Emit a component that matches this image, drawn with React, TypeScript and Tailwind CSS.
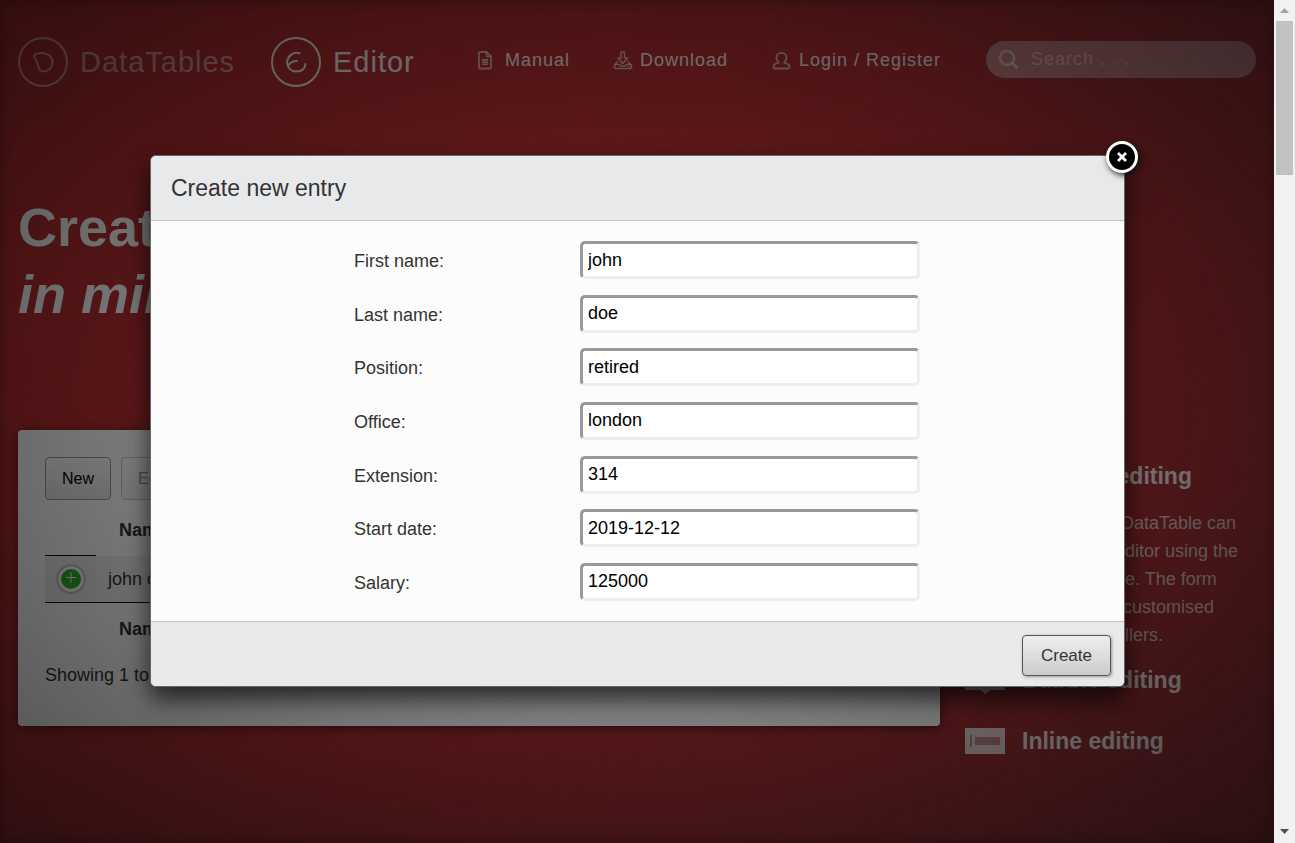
import React from "react";

const fields = [
  { id: "first-name", label: "First name:", value: "john" },
  { id: "last-name", label: "Last name:", value: "doe" },
  { id: "position", label: "Position:", value: "retired" },
  { id: "office", label: "Office:", value: "london" },
  { id: "extension", label: "Extension:", value: "314" },
  { id: "start-date", label: "Start date:", value: "2019-12-12" },
  { id: "salary", label: "Salary:", value: "125000" },
];

function ManualIcon() {
  return (
    <svg width="16" height="20" viewBox="0 0 16 20" fill="none" stroke="currentColor" strokeWidth="1.8" strokeLinejoin="round">
      <path d="M3 2h6.500l4.500 4.500v11a1 1 0 0 1-1 1H3a1 1 0 0 1-1-1V3a1 1 0 0 1 1-1z" />
      <path d="M9.500 2v4.500H14" strokeWidth="1.500" />
      <path d="M5 10h6M5 12.500h6" strokeWidth="2" />
      <path d="M5 14.500h6" strokeWidth="1" />
    </svg>
  );
}

function DownloadIcon() {
  return (
    <svg width="20" height="20" viewBox="0 0 20 20" fill="none" stroke="currentColor" strokeWidth="1.6" strokeLinejoin="round">
      <path d="M8 2h3.500v6h3.200l-5 5.500L4.800 8H8z" />
      <path d="M4.500 11.500 2 14.500M15 11.500l2.500 3" />
      <path d="M2.500 14.500h4l1.500 1.500h4l1.500-1.500h4c.7 0 1 .4 1 1v2c0 .6-.3 1-1 1h-15c-.7 0-1-.4-1-1v-2c0-.6.3-1 1-1z" />
      <path d="M14.500 16.700h2" strokeWidth="1.200" />
    </svg>
  );
}

function UserIcon() {
  return (
    <svg width="20" height="20" viewBox="0 0 20 20" fill="none" stroke="currentColor" strokeWidth="1.8" strokeLinejoin="round">
      <path d="M6.800 12.500C5.500 11.500 4.500 9.800 4.500 8c0-3.200 2.200-5.200 5-5.200s5 2 5 5.200c0 1.800-1 3.500-2.300 4.500 1 .7 3 .9 4.300 2 .8.700 1 1.500 1 2.300 0 1-.6 1.700-1.600 1.700H3.100c-1 0-1.600-.7-1.600-1.700 0-.8.200-1.600 1-2.300 1.300-1.100 3.300-1.300 4.300-2z" />
    </svg>
  );
}

function Header() {
  return (
    <header className="flex items-start pt-[37px]">
      <a href="#datatables" className="flex w-[253px] items-center gap-3 text-[29px] leading-[50px] tracking-[1px] text-white/50">
        <svg width="50" height="50" viewBox="0 0 50 50" fill="none" stroke="currentColor">
          <circle cx="25" cy="25" r="24" strokeWidth="2" />
          <path d="M16.500 20.500c-1.500-2 1-4 4.500-4.300 7-.8 13.500 2.300 13.500 8.800 0 6-4.500 9.500-9.500 9.500-4 0-4.500-4-5.500-7.500-.8-2.500-1.500-4.500-3-6.500z" strokeWidth="2" />
        </svg>
        DataTables
      </a>
      <a href="#editor" className="flex w-[206px] items-center gap-3 text-[29px] leading-[50px] tracking-[1px] text-white/90">
        <svg width="50" height="50" viewBox="0 0 50 50" fill="none" stroke="currentColor" strokeLinecap="round">
          <circle cx="25" cy="25" r="24" strokeWidth="2" />
          <path d="M28.500 16.200c-5-1.500-11 1.300-12.200 7.300-1 6 3 11 8.700 11 5 0 8.800-2.500 9.500-7.500M26 24c-4 0-7 2-8.500 4.500" strokeWidth="2" />
        </svg>
        Editor
      </a>
      <nav className="flex grow items-center text-[18px] leading-[46px] tracking-[1px] text-white/90">
        <a href="#manual" className="flex w-[136px] items-center gap-3">
          <span className="text-white/60"><ManualIcon /></span>Manual
        </a>
        <a href="#download" className="flex w-[159px] items-center gap-[7px]">
          <span className="text-white/60"><DownloadIcon /></span>Download
        </a>
        <a href="#login" className="flex items-center gap-[7px] whitespace-nowrap">
          <span className="text-white/60"><UserIcon /></span>Login / Register
        </a>
      </nav>
      <label className="mt-1 flex h-[37px] w-[270px] items-center gap-3 rounded-full bg-white/40 px-3 text-white/50">
        <svg width="21" height="21" viewBox="0 0 21 21" fill="none" stroke="currentColor" className="shrink-0">
          <circle cx="9" cy="9" r="7" strokeWidth="2.500" />
          <path d="M14 14l5.500 5.500" strokeWidth="3" />
        </svg>
        <input
          type="search"
          aria-label="Search"
          placeholder="Search . . ."
          className="w-full min-w-0 bg-transparent text-[18px] tracking-[1px] outline-none placeholder:text-white/50"
        />
      </label>
    </header>
  );
}

function TablePanel() {
  return (
    <section className="min-h-[296px] grow rounded bg-white p-[27px] text-[18px] text-[#333] shadow-[0_2px_12px_rgba(0,0,0,0.5)]">
      <div className="flex gap-[10px] text-[16px]">
        <button className="h-[43px] rounded-sm border border-[#999] bg-linear-to-b from-white to-[#e9e9e9] px-4 text-black">New</button>
        <button className="h-[43px] rounded-sm border border-[#ccc] bg-linear-to-b from-white to-[#f4f4f4] px-4 text-[#999]">Edit</button>
      </div>
      <table className="mt-1 w-full border-separate border-spacing-0">
        <thead>
          <tr className="h-[52px]">
            <th className="w-[51px] border-b border-[#111]" />
            <th className="w-[95px]">Name</th>
            <th />
          </tr>
        </thead>
        <tbody>
          <tr className="h-[46px] bg-[#f0f0f0]">
            <td className="bg-[#ececec]">
              <button aria-label="Show details" className="mx-auto flex size-[26px] items-center justify-center rounded-full border-[3px] border-white bg-[#31b131] shadow-[0_0_3px_#444]">
                <svg width="12" height="14" viewBox="0 0 12 14" stroke="white" strokeWidth="1"><path d="M6 0.500v10M1 5.500h10" /></svg>
              </button>
            </td>
            <td className="px-3 whitespace-nowrap">john doe</td>
            <td />
          </tr>
        </tbody>
        <tfoot>
          <tr className="h-[54px]">
            <th className="border-t border-[#111]" />
            <th className="border-t border-[#111]">Name</th>
            <th className="border-t border-[#111]" />
          </tr>
        </tfoot>
      </table>
      <p className="mt-1 leading-[30px]">Showing 1 to 1 of 1 entries</p>
    </section>
  );
}

function Features() {
  return (
    <aside className="w-[291px] shrink-0 pt-8 text-white/80">
      <div className="flex gap-[17px]">
        <svg width="40" height="27" viewBox="0 0 40 27" fill="currentColor" className="shrink-0"><path d="M0 0h40v27H0z" /></svg>
        <div>
          <h2 className="text-[23px] leading-7 font-bold text-white/90">Full row editing</h2>
          <p className="mt-[19px] text-[18px] leading-7 whitespace-nowrap text-white/70">
            Rows in the DataTable can<br />edited with Editor using the<br />main interface. The form<br />may be fully customised<br />in any controllers.
          </p>
        </div>
      </div>
      <div className="mt-[17px] flex items-center gap-[17px]">
        <svg width="40" height="28" viewBox="0 0 40 28" fill="currentColor"><path d="M0 0h40v24H25l-4.500 4-4.500-4H0z" /></svg>
        <h2 className="text-[23px] leading-7 font-bold text-white/90">Bubble editing</h2>
      </div>
      <div className="mt-[33px] flex items-center gap-[17px]">
        <svg width="40" height="26" viewBox="0 0 40 26">
          <path d="M0 0h40v26H0z" fill="currentColor" />
          <path d="M5 7h2v12H5zM10 9h25v8H10z" fill="#c58a8c" />
        </svg>
        <h2 className="text-[23px] leading-7 font-bold text-white/90">Inline editing</h2>
      </div>
    </aside>
  );
}

function EntryDialog() {
  return (
    <div className="absolute inset-0 flex items-start justify-center bg-[radial-gradient(ellipse_farthest-corner_at_center,rgba(0,0,0,0.3)_0%,rgba(0,0,0,0.7)_100%)] pt-[155px] pl-px">
      <form
        role="dialog"
        aria-labelledby="dialog-title"
        onSubmit={(e) => e.preventDefault()}
        className="relative w-[975px] max-w-full rounded-md border border-[#666] bg-[#fcfcfc] text-[18px] text-[#333] shadow-[0_12px_25px_rgba(0,0,0,0.7)]"
      >
        <button
          type="button"
          aria-label="Close"
          className="absolute -top-[15px] -right-[14px] flex size-8 items-center justify-center rounded-full border-[3px] border-white bg-black shadow-[2px_2px_6px_#111]"
        >
          <svg width="10" height="10" viewBox="0 0 10 10" stroke="white" strokeWidth="2.800"><path d="M1 1l8 8M9 1l-8 8" /></svg>
        </button>
        <div className="rounded-t-[5px] border-b border-[#c3c3c7] bg-[#e8e9eb] px-5 py-4">
          <h1 id="dialog-title" className="text-[23px] leading-8">Create new entry</h1>
        </div>
        <div className="flex min-h-[400px] flex-col justify-between py-5">
          {fields.map((f) => (
            <div key={f.id} className="flex items-center pl-[203px]">
              <label htmlFor={f.id} className="w-[226px] pt-[3px]">{f.label}</label>
              <input
                id={f.id}
                defaultValue={f.value}
                className="h-[38px] w-[340px] rounded-[5px] border-[3px] border-t-[#999] border-r-[#eee] border-b-[#eee] border-l-[#999] bg-white px-[5px] text-black outline-none"
              />
            </div>
          ))}
        </div>
        <div className="flex justify-end rounded-b-[5px] border-t border-[#c3c3c7] bg-[#e8e9eb] px-[13px] pt-[13px] pb-[10px]">
          <button
            type="submit"
            className="h-[41px] rounded-sm border border-[#555] bg-linear-to-b from-[#efefef] to-[#cccccc] px-[18px] text-[17px] shadow-[1px_1px_3px_#999]"
          >
            Create
          </button>
        </div>
      </form>
    </div>
  );
}

function ScrollBar() {
  return (
    <div className="flex w-[21px] shrink-0 flex-col items-center bg-[#f1f1f1]">
      <svg width="21" height="21" viewBox="0 0 21 21"><path d="M6 13l4.500-5 4.500 5z" fill="#a3a3a3" /></svg>
      <div className="h-[154px] w-[17px] bg-[#c1c1c1]" />
      <svg width="21" height="21" viewBox="0 0 21 21" className="mt-auto"><path d="M6 7l4.500 5L15 7z" fill="#505050" /></svg>
    </div>
  );
}

export default function App() {
  return (
    <div className="flex h-screen overflow-hidden font-['Liberation_Sans',Arial,sans-serif]">
      <div className="relative min-w-0 grow overflow-hidden bg-[radial-gradient(ellipse_at_25%_40%,#bc2f32_0%,#b02d30_50%,#8c343a_100%)] px-[18px] shadow-[inset_0_0_15px_rgba(0,0,0,0.3)]">
        <Header />
        <p className="mt-[107px] text-[54px] leading-[67px] font-bold text-white">
          Create
          <br />
          <em>in minutes</em>
        </p>
        <div className="mt-[102px] flex items-start gap-[25px]">
          <TablePanel />
          <Features />
        </div>
        <EntryDialog />
      </div>
      <ScrollBar />
    </div>
  );
}
